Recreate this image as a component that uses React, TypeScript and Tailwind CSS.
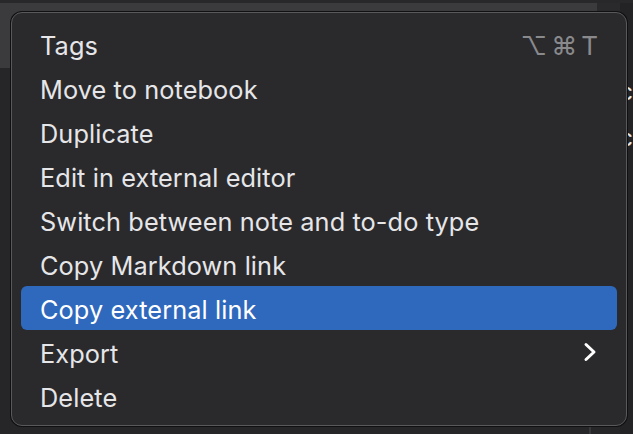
import React from "react";

const items = [
  "Tags",
  "Move to notebook",
  "Duplicate",
  "Edit in external editor",
  "Switch between note and to-do type",
  "Copy Markdown link",
  "Copy external link",
  "Export",
  "Delete",
];

export default function App() {
  return (
    <div
      className="relative w-[633px] h-[434px] overflow-hidden bg-[#262629]"
      style={{ fontFamily: "Inter, 'DejaVu Sans', sans-serif" }}
    >
      {/* background app */}
      <div className="flex flex-col h-full">
        <div className="h-[3px] bg-[#28282b]" />
        <div className="flex h-[65px]">
          <div className="w-[597px] bg-[#3b3b3d]" />
          <div className="w-[23px] bg-[#2a2a2d]" />
          <div className="flex-1 bg-[#232326]" />
        </div>
        <div className="flex flex-1">
          <div className="w-[595px] bg-[#262629]" />
          <div className="w-[2px] bg-[#38383b]" />
          <div className="w-[30px] bg-[#262629]" />
          <div className="flex-1 bg-[#232326] text-[#e6e6e6] text-[24px] leading-none pt-[12px] flex flex-col gap-[22px]">
            <span className="-ml-[1px]">c</span>
            <span className="-ml-[1px]">c</span>
          </div>
        </div>
      </div>

      {/* menu */}
      <div className="absolute left-[11px] top-[12px] w-[616px] h-[414px] rounded-[11px] border border-[#59595c] bg-[#2a2a2d] shadow-[0_0_0_1px_#101012] px-[9px] pt-[9px] pb-[7px] flex flex-col">
        {items.map((label, i) => {
          const active = label === "Copy external link";
          return (
            <div
              key={i}
              className={`flex items-center h-[44px] shrink-0 rounded-[6px] pl-[19px] pr-[19px] pt-[3px] text-[25.3px] tracking-[0.1px] ${
                active ? "bg-[#2f69bd] text-white" : "text-[#e6e6e8]"
              }`}
            >
              <span className="flex-1">{label}</span>
              {label === "Tags" && (
                <span className="text-[#8a8a8d] text-[26px] tracking-[4px] mr-[-4px]">⌥⌘T</span>
              )}
              {label === "Export" && (
                <svg width="14" height="20" viewBox="0 0 14 20" className="mr-[1px] -mt-[3px]">
                  <path d="M3 2.5 L11 10 L3 17.5" fill="none" stroke="#ffffff" strokeWidth="3" strokeLinecap="round" strokeLinejoin="round" />
                </svg>
              )}
            </div>
          );
        })}
      </div>
    </div>
  );
}
